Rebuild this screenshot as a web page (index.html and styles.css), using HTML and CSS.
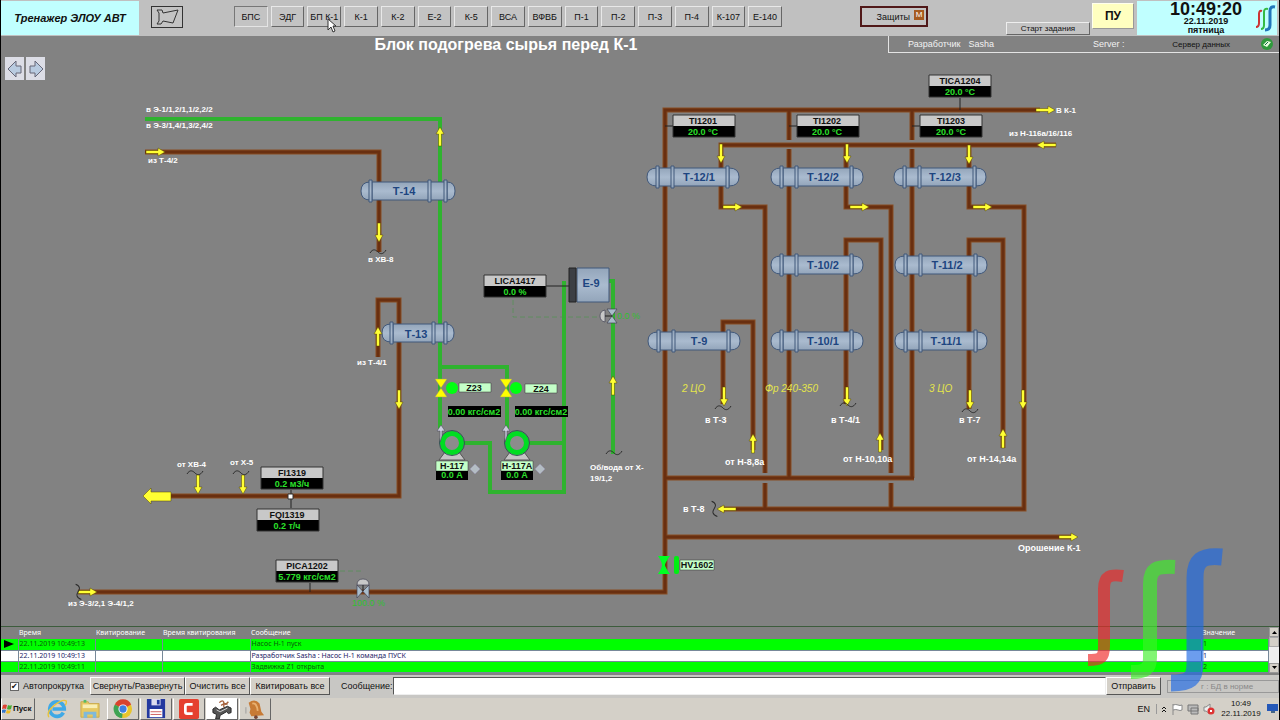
FILE: index.html
```html
<!DOCTYPE html>
<html lang="ru">
<head>
<meta charset="utf-8">
<title>Тренажер ЭЛОУ АВТ</title>
<link rel="stylesheet" href="styles.css">
</head>
<body>
<div class="screen">
  <header class="topbar">
    <div class="brand">Тренажер ЭЛОУ АВТ</div>
    <button class="horn" aria-label="Сигнал"><svg width="26" height="18" viewBox="0 0 26 18"><path d="M3 2h5l1 3L24 2l-5 13-10-2-2 3H3l2-3V5z"/></svg></button>
    <nav class="screens">
      <button class="on">БПС</button><button>ЭДГ</button><button class="hover">БП К-1<svg class="cursor" width="10" height="16" viewBox="0 0 10 16"><path d="M1 1v11l3-3 2 5 2-1-2-5h3z"/></svg></button><button>К-1</button><button>К-2</button><button>Е-2</button><button>К-5</button><button>ВСА</button><button>ВФВБ</button><button>П-1</button><button>П-2</button><button>П-3</button><button>П-4</button><button>К-107</button><button>Е-140</button>
    </nav>
    <button class="guards">Защиты <span class="m">М</span></button>
    <button class="start-task">Старт задания</button>
    <button class="pu">ПУ</button>
    <div class="clock">
      <div class="clock-text"><strong>10:49:20</strong><b>22.11.2019</b><b>пятница</b></div>
      <svg width="22" height="28" viewBox="0 0 22 28"><g fill="none"><path stroke="#c33" stroke-width="2" d="M7 7Q4 6 4 10v9q0 4-3 4"/><path stroke="#3b4" stroke-width="2" d="M13 5Q9 4 9 8v13q0 4-3 4"/><path stroke="#27b" stroke-width="3" d="M20 3q-5-1-5 4v14q0 5-5 5"/></g></svg>
    </div>
  </header>

  <div class="subbar">
    <h1>Блок подогрева сырья перед К-1</h1>
    <div class="session">
      <span class="role">Разработчик</span><span class="user">Sasha</span><span class="server">Server :</span><span class="data">Сервер данных</span>
      <svg width="14" height="14" viewBox="0 0 14 14"><circle cx="7" cy="7" r="6" fill="#2f9a3c"/><path d="M3 8l4-4 4 1-4 5z" fill="#e8ffe0"/><path d="M5 8l3-3" stroke="#164" /></svg>
    </div>
  </div>

  <main class="stage">
    <div class="history">
      <button aria-label="Назад"><svg width="18" height="22" viewBox="0 0 18 22"><path d="M2 11l8-8v5h5v7h-5v4z"/></svg></button>
      <button aria-label="Вперед"><svg width="18" height="22" viewBox="0 0 18 22"><path d="M16 11L8 3v5H3v7h5v4z"/></svg></button>
    </div>
    <svg class="scheme" viewBox="1 53 1278 573" role="img" aria-label="Схема блока подогрева сырья">
      <defs>
        <linearGradient id="steel" x1="0" y1="0" x2="0" y2="1"><stop offset="0" stop-color="#93a5ba"/><stop offset=".5" stop-color="#aabbcf"/><stop offset="1" stop-color="#93a5ba"/></linearGradient>
        <g id="arr"><path d="M0-1.500H12V-4L19 0 12 4V1.500H0z"/></g>
        <path id="wave" d="M-8 1C-5-4-2-2 0 0S5 3 8-2"/>
        <g id="plate"><path fill="#c8c8c8" d="M0 0h62v12H0z"/><path fill="#000" d="M0 11h62v11H0z"/><path fill="none" stroke="#333" d="M0 0h62v22H0z"/></g>
        <g id="hx"><path d="M11 2Q1 2 1 11t10 9z"/><path d="M83 2q10 0 10 9t-10 9z"/><path d="M13 2h68v18H13z"/><path d="M10 0h3v22h-3zM25 0h3v22h-3zM80 0h3v22h-3z"/></g>
        <g id="hx14"><path d="M9 2Q0 2 0 11t9 9z"/><path d="M86 2q8 0 8 9t-8 9z"/><path d="M11 2h73v18H11z"/><path d="M8 0h3v22H8zM67 0h3v22h-3zM83 0h3v22h-3z"/></g>
        <g id="hx13"><path d="M9 2Q0 2 0 11t9 9z"/><path d="M64 2q8 0 8 9t-8 9z"/><path d="M11 2h51v18H11z"/><path d="M8 0h3v22H8zM50 0h3v22h-3zM62 0h3v22h-3z"/></g>
        <g id="pump"><path d="M-7 9h14l6 8h-26z" fill="#c4c4c4" stroke="#555"/><circle r="9.500" fill="#8c8c8c" stroke="#0d2" stroke-width="5"/><circle r="12.500" fill="none" stroke="#355"/><path d="M-12-1v-11h-3l4-6 4 6h-3v5z" fill="#ccd" stroke="#445" stroke-width=".5"/></g>
        <path id="bow" d="M-6-9H6L-6 9H6z"/>
        <path id="pipes" d="M145 152H379V252M378 357V300H399V496H170M1040 110H665V592H78M789 110V140M789 149V478M912 110V140M912 149V478M1056 145H721V207H765V473M765 483V509M846 145V207H891V473M891 483V509M969 145V207H1024V509H720M723 404V322H753V450M846 404V240H881V450M969 409V240H1003V448M665 478H914M665 537H1074"/>
      </defs>

      <use href="#pipes" class="pipe-edge"/><use href="#pipes" class="pipe-core"/>
      <path class="green" d="M145 119H440V430M440 367H507V430M464 443H490V492H564V281M530 443H564M608 281H613V454"/>
      <path class="signal" d="M513 300V317H600M340 571H363"/>
      <g class="lead"><path d="M546 286H569M665 126H673M789 126H797M912 126H920M960 98V110M291 490V508M310 583V592"/></g>

      <g class="vessel"><use href="#hx14" x="361" y="180"/><use href="#hx13" x="382" y="322"/>
        <use href="#hx" x="646" y="166"/><use href="#hx" x="770" y="166"/><use href="#hx" x="893" y="166"/>
        <use href="#hx" x="770" y="254"/><use href="#hx" x="894" y="254"/>
        <use href="#hx" x="647" y="330"/><use href="#hx" x="770" y="330"/><use href="#hx" x="894" y="330"/>
        <path d="M577 268h32v34h-32z"/></g>
      <path fill="#3c3f44" stroke="#222" d="M569 268h7v34h-7z"/>
      <g class="vessel-name"><text x="404" y="195">Т-14</text><text x="416" y="338">Т-13</text><text x="699" y="181">Т-12/1</text><text x="823" y="181">Т-12/2</text><text x="945" y="181">Т-12/3</text><text x="823" y="269">Т-10/2</text><text x="947" y="269">Т-11/2</text><text x="699" y="345">Т-9</text><text x="823" y="345">Т-10/1</text><text x="946" y="345">Т-11/1</text><text x="591" y="287">Е-9</text></g>

      <g class="flow">
        <use href="#arr" transform="translate(146 152)"/><use href="#arr" transform="translate(78 592)"/><use href="#arr" transform="translate(1036 110)"/><use href="#arr" transform="translate(723 207)"/><use href="#arr" transform="translate(850 207)"/><use href="#arr" transform="translate(973 207)"/><use href="#arr" transform="translate(1059 537)"/>
        <use href="#arr" transform="translate(1056 145) rotate(180)"/><use href="#arr" transform="translate(736 509) rotate(180)"/>
        <use href="#arr" transform="translate(440 146) rotate(-90)"/><use href="#arr" transform="translate(378 346) rotate(-90)"/><use href="#arr" transform="translate(613 395) rotate(-90)"/><use href="#arr" transform="translate(753 453) rotate(-90)"/><use href="#arr" transform="translate(880 452) rotate(-90)"/><use href="#arr" transform="translate(1003 448) rotate(-90)"/>
        <use href="#arr" transform="translate(379 223) rotate(90)"/><use href="#arr" transform="translate(399 390) rotate(90)"/><use href="#arr" transform="translate(198 475) rotate(90)"/><use href="#arr" transform="translate(243 475) rotate(90)"/><use href="#arr" transform="translate(721 144) rotate(90)"/><use href="#arr" transform="translate(847 144) rotate(90)"/><use href="#arr" transform="translate(969 145) rotate(90)"/><use href="#arr" transform="translate(724 387) rotate(90)"/><use href="#arr" transform="translate(847 387) rotate(90)"/><use href="#arr" transform="translate(970 390) rotate(90)"/><use href="#arr" transform="translate(1023 390) rotate(90)"/>
        <path d="M143 496l8-8v4h20v9h-20v3z"/>
      </g>
      <g class="wave"><use href="#wave" x="378" y="252"/><use href="#wave" x="195" y="473"/><use href="#wave" x="241" y="473"/><use href="#wave" x="614" y="453"/><use href="#wave" x="723" y="408"/><use href="#wave" x="848" y="405"/><use href="#wave" x="970" y="411"/><use href="#wave" transform="translate(714 509) rotate(80)"/><use href="#wave" transform="translate(78 592) rotate(80)"/></g>

      <g class="note">
        <text x="146" y="112">в Э-1/1,2/1,1/2,2/2</text><text x="146" y="128">в Э-3/1,4/1,3/2,4/2</text><text x="148" y="163">из Т-4/2</text><text x="368" y="262">в ХВ-8</text><text x="357" y="365">из Т-4/1</text><text x="177" y="467">от ХВ-4</text><text x="230" y="465">от Х-5</text><text x="68" y="606">из Э-3/2,1 Э-4/1,2</text><text x="590" y="470">Об/вода от Х-</text><text x="590" y="481">19/1,2</text><text x="1056" y="113">В К-1</text><text x="1009" y="136">из Н-116а/16/116</text>
      </g>
      <g class="note big"><text x="705" y="423">в Т-3</text><text x="831" y="423">в Т-4/1</text><text x="959" y="423">в Т-7</text><text x="725" y="465">от Н-8,8а</text><text x="843" y="462">от Н-10,10а</text><text x="967" y="462">от Н-14,14а</text><text x="683" y="512">в Т-8</text><text x="1018" y="551">Орошение К-1</text></g>
      <g class="fraction"><text x="682" y="392">2 ЦО</text><text x="765" y="392">Фр 240-350</text><text x="929" y="392">3 ЦО</text></g>

      <use href="#plate" x="484" y="275"/><use href="#plate" x="673" y="115"/><use href="#plate" x="797" y="115"/><use href="#plate" x="920" y="115"/><use href="#plate" x="929" y="75"/><use href="#plate" x="261" y="467"/><use href="#plate" x="257" y="509"/><use href="#plate" x="276" y="560"/>
      <g class="tag"><text x="515" y="284">LICA1417</text><text x="703" y="124">TI1201</text><text x="827" y="124">TI1202</text><text x="951" y="124">TI1203</text><text x="960" y="84">TICA1204</text><text x="292" y="476">FI1319</text><text x="287" y="518">FQI1319</text><text x="307" y="569">PICA1202</text></g>
      <g class="value"><text x="515" y="295">0.0 %</text><text x="703" y="135">20.0 °C</text><text x="827" y="135">20.0 °C</text><text x="951" y="135">20.0 °C</text><text x="960" y="95">20.0 °C</text><text x="292" y="487">0.2 м3/ч</text><text x="287" y="529">0.2 т/ч</text><text x="307" y="580">5.779 кгс/см2</text></g>
      <path d="M288 494h5v5h-5z" fill="#fff" stroke="#333"/>

      <g fill="#ff0" stroke="#996" stroke-width=".5"><use href="#bow" x="441" y="388"/><use href="#bow" x="506" y="388"/></g>
      <circle cx="452" cy="388" r="6" fill="#0f1"/><circle cx="516" cy="388" r="6" fill="#0f1"/>
      <g class="mint"><path d="M459 383h32v9h-32zM525 384h32v9h-32zM436 461h32v10h-32zM501 461h32v10h-32zM680 560h34v10h-34z"/></g>
      <path d="M448 406h53v11h-53zM515 406h53v11h-53zM436 471h32v9h-32zM501 471h32v9h-32z"/>
      <g class="tag"><text x="474" y="391">Z23</text><text x="541" y="392">Z24</text><text x="452" y="469">Н-117</text><text x="517" y="469">Н-117А</text><text x="697" y="568">HV1602</text></g>
      <g class="value"><text x="474" y="415">0.00 кгс/см2</text><text x="541" y="415">0.00 кгс/см2</text><text x="452" y="478">0.0 А</text><text x="517" y="478">0.0 А</text></g>
      <use href="#pump" x="452" y="443"/><use href="#pump" x="517" y="443"/>
      <path d="M475 464l5 5-5 5-5-5zM540 464l5 5-5 5-5-5z" fill="#b4bdc4" stroke="#99a"/>

      <g fill="#a9bccb" stroke="#445" stroke-width=".7"><path d="M607 309h10l-10 14h10zM363 591l6-6v13l-12-13v13z"/><path d="M605 310q-5 1-5 6t5 6zM357 585q0-6 6-6t6 6z" fill="#c8c8c8"/></g>
      <path d="M605 316h7M363 585v6" stroke="#222"/>
      <g class="position"><text x="617" y="319">0.0 %</text><text x="352" y="606">100.0 %</text></g>
      <path d="M658 556h12q-5 7-5 9t5 9h-12q4-6 4-9t-4-9z" fill="#0f2"/><rect x="674" y="556" width="5" height="18" rx="2" fill="#0e1"/>
    </svg>
  </main>

  <section class="alarms">
    <table>
      <colgroup><col class="c-mark"><col class="c-time"><col class="c-ack"><col class="c-acktime"><col><col class="c-value"></colgroup>
      <thead><tr><th></th><th>Время</th><th>Квитирование</th><th>Время квитирования</th><th>Сообщение</th><th>Значение</th></tr></thead>
      <tbody>
        <tr class="alarm"><td><svg width="10" height="8" viewBox="0 0 10 8"><path d="M0 0l10 4-10 4z"/></svg></td><td>22.11.2019 10:49:13</td><td></td><td></td><td>Насос Н-1 пуск</td><td>1</td></tr>
        <tr><td></td><td>22.11.2019 10:49:13</td><td></td><td></td><td>Разработчик Sasha : Насос Н-1 команда ПУСК</td><td>1</td></tr>
        <tr class="alarm"><td></td><td>22.11.2019 10:49:11</td><td></td><td></td><td>Задвижка Z1 открыта</td><td>2</td></tr>
      </tbody>
    </table>
    <div class="scroll"><button aria-label="Вверх"><svg width="5" height="3" viewBox="0 0 5 3"><path d="M0 3l2.500-3L5 3z"/></svg></button><i></i><button aria-label="Вниз"><svg width="5" height="3" viewBox="0 0 5 3"><path d="M0 0l2.500 3L5 0z"/></svg></button></div>
  </section>

  <form class="controls">
    <label class="auto"><input type="checkbox" checked>Автопрокрутка</label>
    <button type="button" class="w1">Свернуть/Развернуть</button><button type="button" class="w2">Очистить все</button><button type="button" class="w3">Квитировать все</button>
    <label class="msg" for="msg">Сообщение:</label><input id="msg" type="text">
    <button type="button" class="w4">Отправить</button>
    <div class="db">г : БД в норме</div>
  </form>

  <footer class="taskbar">
    <button class="start"><svg width="10" height="10" viewBox="0 0 10 10"><path fill="#d43" d="M1 1q2-1 4 0L4 5Q2 4 0 5z"/><path fill="#4a3" d="M6 1q2 1 4 0L9 5q-2 1-4 0z"/><path fill="#37c" d="M0 6q2-1 4 0l-1 3Q1 8 0 9z"/><path fill="#eb2" d="M5 6q2 1 4 0L8 9q-2 1-4 0z"/></svg>Пуск</button>
    <button class="app plain" aria-label="Internet Explorer"><svg viewBox="0 0 22 22"><path d="M18 15A8 8 0 1 1 19 11H6" fill="none" stroke="#3fa9e6" stroke-width="4"/><path d="M2 20Q-1 14 8 7T21 2q1 2-1 5" fill="none" stroke="#e9c33c" stroke-width="1.500"/></svg></button>
    <button class="app plain" aria-label="Проводник"><svg viewBox="0 0 22 22"><path d="M1 3h8l1 2h11v15H1z" fill="#e6c862" stroke="#c9a94c"/><path d="M3 6h16v4H3z" fill="#f8eeb4"/><path d="M4 21v-7h14v7h-4v-4H8v4z" fill="#7fb9da"/><path d="M4 1h3v3H4z" fill="#5b6"/></svg></button>
    <button class="app" aria-label="Chrome"><svg viewBox="0 0 22 22"><circle cx="11" cy="11" r="10" fill="#e8c52d"/><path d="M11 11L2 6a10 10 0 0 1 18 0z" fill="#d9432f"/><path d="M11 11L2 6a10 10 0 0 0 8 15z" fill="#3ea354"/><circle cx="11" cy="11" r="5" fill="#fff"/><circle cx="11" cy="11" r="4" fill="#3f7fe0"/></svg></button>
    <button class="app" aria-label="Сохранение"><svg viewBox="0 0 22 22"><path d="M1 0h20v21H1z" fill="#24399f"/><path d="M6 0h10v7H6z" fill="#dde"/><path d="M12 1h3v5h-3z" fill="#24399f"/><path d="M4 11h14v9H4z" fill="#fff"/><path d="M5 14h12M5 17h12" stroke="#c55"/></svg></button>
    <button class="app" aria-label="Camtasia"><svg viewBox="0 0 22 22"><rect width="22" height="22" rx="2" fill="#e5402f"/><path d="M15 6H9Q7 6 7 8v6q0 2 2 2h6" fill="none" stroke="#fff" stroke-width="3"/></svg></button>
    <button class="app active" aria-label="Тренажер"><svg viewBox="0 0 22 22"><path d="M1 11l3-2 4 3 9-4 4 2v5l-3 1-2-2-7 4-1 4H4l1-5-4-2z" fill="#555" stroke="#222"/><path d="M5 12l4 2 8-4" stroke="#ddd" fill="none"/><path d="M8 4q4-4 5 0t5-1M10 7q4-3 7-1M13 3v6" fill="none" stroke="#a5623d" stroke-width="1.500"/></svg></button>
    <button class="app" aria-label="Сигнализация"><svg viewBox="0 0 22 22"><path d="M4 4q7-5 12 1l2 9 3 4-14 1-2-4 1-4z" fill="#c77a35"/><path d="M8 5q5-1 6 8" fill="none" stroke="#e9b070" stroke-width="2"/><circle cx="12" cy="20" r="2" fill="#743"/><path d="M1 9v7" stroke="#999"/></svg></button>
    <div class="tray"><span class="lang">EN</span><svg width="6" height="8" viewBox="0 0 6 8"><path d="M1 4l2-2 2 2M1 7l2-2 2 2" fill="none" stroke="#111"/></svg>
      <svg width="12" height="12" viewBox="0 0 12 12"><path d="M2 1v11M2 2q3-1 5 0t4 0v5q-2 1-4 0T2 7" fill="#fff" stroke="#888"/></svg>
      <svg width="12" height="12" viewBox="0 0 12 12"><path d="M1 2h10v6H1zM4 5h7v6H4z" fill="#bbb" stroke="#777"/></svg>
      <svg width="12" height="12" viewBox="0 0 12 12"><path d="M1 4h2l4-3v10L3 8H1z" fill="#eee" stroke="#888"/><circle cx="8" cy="8" r="3.500" fill="#d33"/><path d="M7 7l2 2m0-2L7 9" stroke="#fff"/></svg>
      <time><span>10:49</span><span>22.11.2019</span></time>
      <svg width="11" height="9" viewBox="0 0 11 9"><path d="M0 0h11v7H0z" fill="#2458b8"/><path d="M4 7h4v2H4z" fill="#468"/></svg>
    </div>
  </footer>

  <svg class="watermark" width="136" height="146" viewBox="1088 546 136 146"><g fill="none"><path stroke="#f02828" stroke-width="12" d="M1123 575C1110 573 1104 575 1104 588V645C1104 657 1101 659 1088 659"/><path stroke="#3ef02a" stroke-width="14" d="M1175 566C1156 565 1150 568 1150 583V656C1150 668 1146 671 1131 671"/><path stroke="#1e6ae6" stroke-width="17" d="M1222 556C1201 554 1195 560 1195 577V662C1195 678 1190 682 1171 682"/></g></svg>
</div>
</body>
</html>
```
FILE: styles.css
```css
* { box-sizing: border-box; }
body { margin: 0; background: #828282; font-family: "Liberation Sans", sans-serif; color: #111; }
button, input { font: inherit; color: inherit; margin: 0; }
button { padding: 0; }
.screen { position: relative; display: flex; flex-direction: column; min-height: 100vh; border: solid #000; border-width: 0 1px; overflow: hidden; }

.topbar { display: flex; height: 36px; background: #c0c0c0; padding: 1px 2px 1px 0; }
.topbar button { background: #c3c3c3; }
.brand { width: 138px; background: #c0ffff; font: italic bold 11px/34px "Liberation Sans", sans-serif; text-align: center; }
.horn { width: 32px; height: 22px; margin: 5px 0 0 12px; border: 1px solid #333; display: grid; place-items: center; }
.horn svg { fill: none; stroke: #333; }
.screens { display: grid; grid-template-columns: repeat(15, 1fr); gap: 3px; width: 548px; height: 21px; margin: 5px 0 0 51px; }
.screens button { position: relative; border: 1px solid; border-color: #e8e8e8 #666 #666 #e8e8e8; font-size: 9px; white-space: nowrap; }
.screens .on { border-color: #777 #e4e4e4 #e4e4e4 #777; }
.cursor { position: absolute; left: 19px; top: 11px; z-index: 1; fill: #fff; stroke: #333; }
.guards { width: 68px; height: 21px; margin: 5px 0 0 auto; border: 2px solid #501818; font-size: 9px; display: flex; justify-content: flex-end; gap: 4px; align-items: center; }
.topbar .guards { padding-right: 2px; }
.m { width: 10px; height: 10px; background: #a75b20; color: #fff; font-size: 8px; line-height: 10px; margin-bottom: 3px; }
.topbar .start-task { align-self: flex-end; width: 84px; height: 13px; margin-left: 78px; border: 1px solid; border-color: #eee #666 #666 #eee; font-size: 8px; line-height: 11px; }
.topbar .pu { width: 42px; height: 26px; margin: 2px 0 0 2px; border: 1px solid; border-color: #ffe #999 #999 #ffe; background: #ffffc0; font-size: 12px; font-weight: bold; }
.clock { display: flex; align-items: center; width: 140px; margin-left: 3px; background: #c0ffff; }
.clock-text { display: flex; flex-direction: column; align-items: center; flex: 1; margin-left: 20px; font-size: 9px; line-height: 9px; }
.clock-text strong { font-size: 18px; line-height: 16px; }

.subbar { display: grid; grid-template-columns: 1fr 391px; height: 17px; }
.subbar h1 { margin: 0 0 0 123px; color: #fff; font-size: 16px; line-height: 17px; text-align: center; }
.session { display: flex; align-items: center; border: solid #e4e4e4; border-width: 0 0 1px 1px; color: #f2f2f2; font-size: 9px; padding: 0 5px 0 19px; }
.user { margin-left: 8px; }
.server { margin-left: 99px; }
.data { margin-left: auto; margin-right: 30px; color: #111; font-size: 8px; }

.stage { position: relative; }
.scheme { display: block; width: 100%; height: auto; font-weight: bold; }
.history { position: absolute; left: 4px; top: 4px; display: flex; gap: 2px; }
.history button { width: 19px; height: 23px; border: 0; background: #dcdde6; display: grid; place-items: center; }
.history svg { fill: #b9cbe0; stroke: #667; }
.pipe-edge { fill: none; stroke: #874c22; stroke-width: 5; }
.pipe-core { fill: none; stroke: #692f10; stroke-width: 3; }
.green { fill: none; stroke: #2fb32f; stroke-width: 4; }
.signal { fill: none; stroke: #4b964b; stroke-dasharray: 5 3; opacity: .6; }
.lead { stroke: #222; fill: none; }
.vessel { fill: url(#steel); stroke: #41587a; stroke-width: 1; }
.vessel-name { font-size: 11px; fill: #1d4580; text-anchor: middle; }
.flow { fill: #ff3; stroke: #554400; stroke-width: .5; }
.wave { fill: none; stroke: #2c2c2c; stroke-width: 1; }
.note { fill: #fff; font-size: 8px; }
.note.big { font-size: 9px; }
.tag, .value { font-size: 9px; text-anchor: middle; }
.tag { fill: #111; }
.value { fill: #2be02b; }
.position { fill: #2fc02f; font-size: 9px; font-weight: normal; }
.fraction { fill: #e4e44c; font-size: 10px; font-style: italic; font-weight: normal; }
.mint { fill: #c4ffc8; stroke: #333; stroke-width: .5; }

.alarms { display: flex; border-top: 1px solid #3c5c3c; margin-bottom: 2px; background: #808080; }
.alarms table { flex: 1; min-width: 0; table-layout: fixed; border-collapse: collapse; font: 7px/10px "Noto Sans", sans-serif; }
.alarms th { height: 12px; padding: 0 1px; color: #fff; font-weight: normal; text-align: left; white-space: nowrap; }
.alarms td { height: 11px; padding: 0 1px; border: solid #789; border-width: 0 1px 1px 0; background: #fff; color: #1b1b66; white-space: nowrap; }
.alarms .alarm td { background: #0f0; color: #0a5b0a; }
.alarms td svg { display: block; margin: 0 auto; }
.c-mark { width: 17px; } .c-time { width: 77px; } .c-ack { width: 67px; } .c-acktime { width: 88px; } .c-value { width: 67px; }
.scroll { width: 10px; display: flex; flex-direction: column; background: #eee; }
.scroll button { height: 10px; border: 1px solid #999; background: #d4d0c8; display: grid; place-items: center; }
.scroll i { height: 10px; background: #d4d0c8; border: 1px solid #aaa; margin-bottom: auto; }

.controls { display: flex; align-items: center; background: #c8c7c4; height: 23px; font-size: 9px; }
.controls button { height: 18px; border: 1px solid; border-color: #fff #555 #555 #fff; background: #d4d0c8; white-space: nowrap; }
.auto { display: flex; align-items: center; gap: 4px; width: 89px; padding-left: 9px; }
.auto input { appearance: none; width: 9px; height: 9px; border: 1px solid #666; background: #fff; }
.auto input:checked::before { content: "✔"; display: block; font: 8px/7px "DejaVu Sans", sans-serif; }
.w1 { width: 95px; } .w2 { width: 65px; } .w3 { width: 80px; } .w4 { width: 55px; }
.msg { margin: 0 1px 0 11px; }
#msg { flex: 1; min-width: 0; height: 18px; border: 1px solid; border-color: #555 #eee #eee #555; background: #fff; }
.db { width: 112px; height: 13px; margin-left: 6px; border: 1px solid #999; color: #888; font-size: 8px; line-height: 11px; padding-left: 33px; }

.taskbar { display: flex; height: 23px; background: #d4d0c8; padding-bottom: 1px; }
.taskbar button { border: 1px solid; border-color: transparent #666 #666 #fff; background: #d4d0c8; }
.start { width: 34px; display: flex; align-items: center; gap: 1px; font-size: 8px; font-weight: bold; }
.app { width: 32px; margin-left: 1px; display: grid; place-items: center; }
.app svg { width: 20px; height: 20px; }
.taskbar .plain { border-color: transparent; }
.start + .plain { margin-left: 6px; }
.taskbar .active { background: #fff; }
.tray { display: flex; align-items: center; gap: 4px; margin-left: auto; padding-right: 1px; font-size: 8px; }
.lang { font-size: 9px; padding-right: 6px; border-right: 1px solid #999; }
.tray time { display: flex; flex-direction: column; align-items: center; width: 44px; line-height: 10px; }

.watermark { position: absolute; right: 55px; bottom: 28px; opacity: .65; pointer-events: none; }
```
